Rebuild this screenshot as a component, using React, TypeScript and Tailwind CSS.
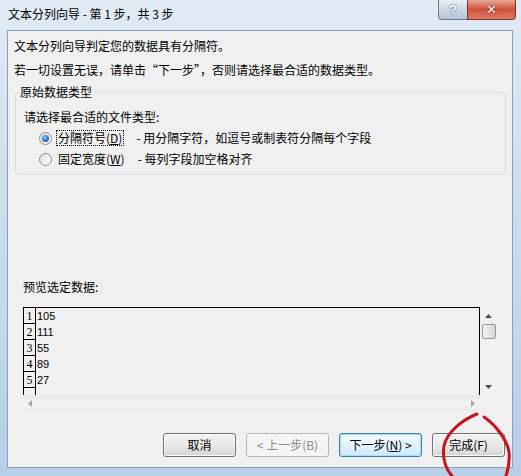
import React from "react";

const cjk = { fontFamily: '"Noto Sans CJK SC", "Microsoft YaHei", sans-serif' };

function Radio({ checked }: { checked?: boolean }) {
  return (
    <span className="w-[13px] h-[13px] rounded-full border border-[#8c8f91] bg-gradient-to-br from-[#d9dcde] to-[#ffffff] flex items-center justify-center shrink-0">
      {checked && (
        <span className="w-[7px] h-[7px] rounded-full bg-[radial-gradient(circle_at_40%_35%,#8fd0f5,#2a76c4_55%,#134f8f)]" />
      )}
    </span>
  );
}

function Btn({
  label,
  width,
  disabled,
  primary,
}: {
  label: React.ReactNode;
  width: string;
  disabled?: boolean;
  primary?: boolean;
}) {
  let cls =
    "h-[24px] rounded-[3px] border text-[12px] leading-[16px] flex items-center justify-center ";
  if (disabled) {
    cls += "border-[#b2b8bc] bg-[#f4f4f4] text-[#8c8c8c]";
  } else if (primary) {
    cls +=
      "border-[#3c7fb1] bg-gradient-to-b from-[#f4fafe] via-[#e3f3fd] to-[#cfe9fa] text-black shadow-[inset_0_0_0_1px_#a9dcf6]";
  } else {
    cls +=
      "border-[#707070] bg-gradient-to-b from-[#f3f3f3] via-[#e9e9e9] to-[#d5d5d5] text-black shadow-[inset_0_0_0_1px_#fbfbfb]";
  }
  return (
    <button className={cls + " " + width} style={cjk}>
      {label}
    </button>
  );
}

const rows = ["105", "111", "55", "89", "27"];

export default function App() {
  return (
    <div className="relative w-[521px] h-[476px] overflow-hidden flex flex-col bg-gradient-to-b from-[#e1eaf5] via-[#c9dbef] to-[#b7cfe9]">
      {/* title bar */}
      <div className="h-[30px] flex items-start justify-between shrink-0">
        <div className="pl-[8px] pt-[6px] text-[12px] leading-[16px] text-black" style={cjk}>
          文本分列向导 - 第 1 步，共 3 步
        </div>
        <div className="flex mr-[5px]">
          <div className="w-[29px] h-[20px] rounded-bl-[4px] border border-t-0 border-r-0 border-[#6b7c92] bg-gradient-to-b from-[#e9eff6] via-[#cbd7e5] to-[#b5c6da] flex items-center justify-center text-white text-[13px] font-bold [text-shadow:0_0_2px_#333]" style={{ fontFamily: '"Liberation Sans", sans-serif' }}>
            ?
          </div>
          <div className="w-[49px] h-[20px] rounded-br-[4px] border border-t-0 border-[#7b3428] bg-gradient-to-b from-[#e9a898] via-[#cf4f38] to-[#dc7a63] flex items-center justify-center text-white text-[13px] font-bold [text-shadow:0_0_2px_#4a1208]" style={{ fontFamily: '"DejaVu Sans", sans-serif' }}>
            ✕
          </div>
        </div>
      </div>

      {/* client area */}
      <div className="ml-[7px] mr-[8px] h-[438px] border border-[#8a9fba] bg-[#f0f0f0] flex flex-col text-[12px] leading-[16px] text-black" style={cjk}>
        <p className="mt-[7px] pl-[6px]">文本分列向导判定您的数据具有分隔符。</p>
        <p className="mt-[8px] pl-[6px]">若一切设置无误，请单击“下一步”，否则请选择最合适的数据类型。</p>

        <fieldset className="mt-[6px] ml-[7px] mr-[6px] pl-[2px] pb-[7px] border border-[#d5dfe5] rounded-[3px]">
          <legend className="px-[2px]">原始数据类型</legend>
          <div className="mt-[9px] ml-[6px]">请选择最合适的文件类型:</div>
          <div className="mt-[5px] ml-[21px] flex items-center h-[16px]">
            <Radio checked />
            <span className="ml-[4px] border border-dotted border-black px-[1px] leading-[14px]">
              分隔符号(<span className="underline">D</span>)
            </span>
            <span className="ml-[12px]">- 用分隔字符，如逗号或制表符分隔每个字段</span>
          </div>
          <div className="mt-[5px] ml-[21px] flex items-center h-[16px]">
            <Radio />
            <span className="ml-[6px]">
              固定宽度(<span className="underline">W</span>)
            </span>
            <span className="ml-[13px]">- 每列字段加空格对齐</span>
          </div>
        </fieldset>

        <div className="mt-[104px] pl-[15px]">预览选定数据:</div>

        {/* preview box */}
        <div className="mt-[12px] ml-[15px] w-[474px] h-[104px] grid grid-cols-[457px_17px] grid-rows-[88px_16px]">
          <div className="border-t border-l border-r border-black bg-[#f0f0f0] flex flex-col overflow-hidden">
            {rows.map((v, i) => (
              <div key={i} className="flex h-[16px] shrink-0">
                <div className="w-[12px] border-r border-b border-black flex items-end justify-center text-[12px] leading-[13px]" style={{ fontFamily: '"Liberation Serif", serif' }}>
                  {i + 1}
                </div>
                <div className="pl-[1px] text-[11px] leading-[16px]" style={{ fontFamily: '"Liberation Sans", sans-serif' }}>
                  {v}
                </div>
              </div>
            ))}
            <div className="flex-1 flex">
              <div className="w-[12px] border-r border-black" />
            </div>
          </div>

          {/* vertical scrollbar */}
          <div className="bg-[#f0f0f0] flex flex-col items-center">
            <div className="h-[17px] flex items-center justify-center">
              <svg width="7" height="4" viewBox="0 0 7 4">
                <path d="M0 4 L3.5 0 L7 4 Z" fill="#4d4d4d" />
              </svg>
            </div>
            <div className="w-[14px] h-[15px] rounded-[2px] border border-[#979797] bg-gradient-to-r from-[#f2f2f2] to-[#d6d6d6]" />
            <div className="flex-1" />
            <div className="h-[17px] flex items-center justify-center">
              <svg width="7" height="4" viewBox="0 0 7 4">
                <path d="M0 0 L3.5 4 L7 0 Z" fill="#4d4d4d" />
              </svg>
            </div>
          </div>

          {/* horizontal scrollbar */}
          <div className="bg-gradient-to-b from-[#e8e8e8] via-[#f3f3f3] to-[#ececec] flex items-center justify-between px-[5px]">
            <svg width="4" height="7" viewBox="0 0 4 7">
              <path d="M4 0 L0 3.5 L4 7 Z" fill="#a3a3a3" />
            </svg>
            <svg width="4" height="7" viewBox="0 0 4 7">
              <path d="M0 0 L4 3.5 L0 7 Z" fill="#a3a3a3" />
            </svg>
          </div>
          <div className="bg-[#f0f0f0]" />
        </div>

        {/* buttons */}
        <div className="mt-[22px] pr-[7px] flex justify-end gap-[10px]">
          <Btn label="取消" width="w-[73px]" />
          <Btn label="< 上一步(B)" width="w-[83px]" disabled />
          <Btn
            label={
              <>
                下一步(<span className="underline">N</span>) &gt;
              </>
            }
            width="w-[83px]"
            primary
          />
          <Btn label="完成(F)" width="w-[73px]" />
        </div>
      </div>

      {/* red annotation */}
      <svg className="absolute left-0 top-0 pointer-events-none" width="521" height="476" viewBox="0 0 521 476">
        <path d="M477 414 C 462 420, 447 432, 444 446 C 442 459, 446 469, 452 476" fill="none" stroke="#c6131c" strokeWidth="3" strokeLinecap="round" />
        <path d="M484 417 C 496 425, 507 440, 509 452 C 510 462, 508 470, 506 476" fill="none" stroke="#c6131c" strokeWidth="3" strokeLinecap="round" />
      </svg>
    </div>
  );
}
